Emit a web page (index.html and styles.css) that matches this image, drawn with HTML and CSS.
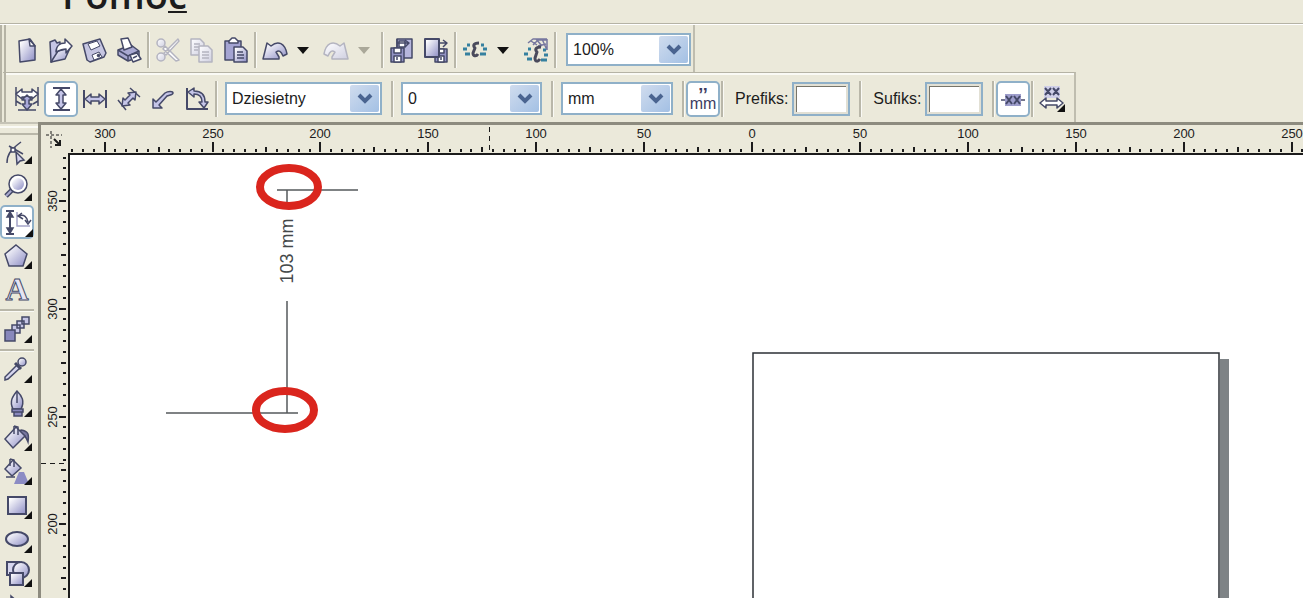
FILE: index.html
```html
<!DOCTYPE html>
<html lang="pl">

<head>
    <meta charset="UTF-8">
    <meta name="viewport" content="width=device-width, initial-scale=1.0">
    <title>Wymiarowanie</title>
    <link rel="stylesheet" href="styles.css">
</head>

<body>
    <!--Shared gradients-->
    <svg class="defs" width="0" height="0" aria-hidden="true">
        <defs>
            <linearGradient id="g" x1="0" y1="0" x2="1" y2="1">
                <stop offset="0.1" stop-color="#ffffff" />
                <stop offset="1" stop-color="#8c8cc4" />
            </linearGradient>
            <linearGradient id="gl" x1="0" y1="0" x2="1" y2="1">
                <stop offset="0.1" stop-color="#fafafd" />
                <stop offset="1" stop-color="#cfcfe0" />
            </linearGradient>
        </defs>
    </svg>

    <!--Menu-->
    <nav class="menubar">
        <button class="menuItem">Pomo<u>c</u></button>
    </nav>

    <!--Standard toolbar-->
    <div class="toolbar standard">
        <button class="tool" aria-label="Nowy"><svg class="icon" viewBox="0 0 26 26"><path fill="url(#g)" d="M5 4l11-2 5 7v14L6 25z" /><path fill="#fff" d="M15 2l1 7h5z" /></svg></button>
        <button class="tool" aria-label="Otwórz"><svg class="icon" viewBox="0 0 26 26"><path fill="#c6c6e6" d="M2 5l5-2 2 3 3-1v6L5 24l-2 1z" /><path fill="url(#g)" d="M3 25l7-11 12-3-5 11z" /><path fill="#fff" d="M8 15c0-6 4-9 9-9V2l7 7-6 7v-4c-4 0-6 1-10 3z" /></svg></button>
        <button class="tool" aria-label="Zapisz"><svg class="icon" viewBox="0 0 26 26"><path fill="#c6c6e2" d="M1 7L18 2l6 14-2 4-14 5-3-2z" /><path fill="#fff" stroke-width="1" d="M6 7l9-3 3 5-9 4zM10 18l7-3 3 5-8 3z" /><path stroke-width="1" fill="#454968" d="M15 18l2-1 1 2-2 1z" /></svg></button>
        <button class="tool" aria-label="Drukuj"><svg class="icon" viewBox="0 0 26 26"><path fill="#a9a9d2" d="M2 13l13-5 8 6v6l-11 4-10-6z" /><path fill="#fff" d="M5 2l7-1 4 9-8 3z" /><path d="M2 13l10 6 11-5M12 19v5" /><path fill="#fff" d="M14 18l7-2 4 6-8 3z" /><path d="M17 21l4-2" /></svg></button>
        <span class="sep"></span>
        <button class="tool" aria-label="Wytnij" disabled><svg class="icon pale" viewBox="0 0 26 26"><path fill="#fff" d="M23 2L9 16l2 2L24 4zM10 9l14 14-3 1L8 12z" /><circle cx="6" cy="6" r="4" fill="url(#gl)" /><circle cx="6" cy="20" r="4" fill="url(#gl)" /></svg></button>
        <button class="tool" aria-label="Kopiuj" disabled><svg class="icon pale" viewBox="0 0 26 26"><path fill="url(#gl)" d="M2 2h9l4 4v12H2z" /><path d="M5 7h6M5 10h6M5 13h4" /><path fill="url(#gl)" d="M10 9h9l4 4v12H10z" /><path d="M13 15h7M13 18h7M13 21h7" /></svg></button>
        <button class="tool" aria-label="Wklej"><svg class="icon" viewBox="0 0 26 26"><path fill="#a4a4d2" d="M2 4h16v19H2z" /><path fill="#fff" d="M6 6V4l3-3h3l3 3v2z" /><path fill="url(#g)" d="M11 10h9l4 4v11H11z" /><path d="M14 15h6M14 18h7M14 21h7" /></svg></button>
        <span class="sep"></span>
        <span class="split">
            <button class="tool" aria-label="Cofnij"><svg class="icon" viewBox="0 0 26 26"><path fill="url(#g)" d="M1 22L5 6l4 3c7-6 14-3 16 8l-4 2c-2-5-4-6-7-4l3 5v2z" /></svg></button>
            <button class="drop" aria-label="Lista cofania"><svg class="caret" viewBox="0 0 12 8"><path d="M0 1h12L6 8z" /></svg></button>
        </span>
        <span class="split">
            <button class="tool" aria-label="Przywróć" disabled><svg class="icon pale" viewBox="0 0 26 26"><path fill="url(#gl)" d="M25 22L21 6l-4 3C10 3 3 6 1 17l4 2c2-5 4-6 7-4l-3 5v2z" /></svg></button>
            <button class="drop" aria-label="Lista przywracania" disabled><svg class="caret off" viewBox="0 0 12 8"><path d="M0 1h12L6 8z" /></svg></button>
        </span>
        <span class="sep"></span>
        <button class="tool" aria-label="Importuj"><svg class="icon" viewBox="0 0 26 26"><path fill="#b6b6dc" d="M8 2h15v19H8z" /><path fill="#fff" d="M10 4h6v6h-6z" /><path d="M8 6h11M8 2v9M16 3l4 3-4 4" /><path fill="#9393c4" d="M2 11h13v14H2z" /><path fill="#fff" d="M5 11h7v5H5zM5 19h7v6H5z" /><path d="M8 20v3" /></svg></button>
        <button class="tool" aria-label="Eksportuj"><svg class="icon" viewBox="0 0 26 26"><path fill="#9393c4" d="M12 12h12v13H12z" /><path fill="#fff" d="M15 12h6v4h-6zM15 19h6v6h-6z" /><path d="M18 20v3" /><path fill="url(#g)" stroke-width="2" d="M2 2h14v18H2z" /><path d="M16 6h8M20 3l4 3-4 4" /></svg></button>
        <span class="sep"></span>
        <span class="split">
            <button class="tool" aria-label="Uruchamianie programów"><svg class="icon" viewBox="0 0 26 26"><path class="teal" d="M5 8h3M1 12h4M3 17h5M19 8h3M21 12h4M18 17h6" /><path class="swirl" d="M17 6c-6 0-6 3-4 5l-2 5c0 3 3 4 5 1" /></svg></button>
            <button class="drop" aria-label="Lista programów"><svg class="caret" viewBox="0 0 12 8"><path d="M0 1h12L6 8z" /></svg></button>
        </span>
        <button class="tool" aria-label="Corel w sieci"><svg class="icon" viewBox="0 0 26 26"><path stroke="#77779f" d="M5 6l5-4h14M8 4l6 4M13 2l6 7M19 2l5 11M24 2v11M10 8l5-5h9M15 9l8-2" /><path class="teal" d="M5 12h3M1 17h4M4 22h5M20 13h3M21 18h4M18 23h6" /><path class="swirl" d="M18 10c-6 0-6 3-4 5l-2 6c0 4 3 4 5 1" /></svg></button>
        <span class="sep"></span>
        <select class="combo zoom" aria-label="Powiększenie"><option>100%</option></select>
    </div>

    <!--Property bar of the dimension tool-->
    <div class="toolbar property">
        <button class="tool" aria-label="Wymiar automatyczny"><svg class="icon" viewBox="0 0 26 26"><path d="M2 1v19M24 1v19M3 6l7 6M23 6l-7 6M4 24h18M7 18l-5-3M19 18l5-3" /><path fill="#fff" d="M2 8l6-5v3h10V3l6 5-6 5v-2H8v2z" /><path fill="#a9a9da" d="M13 9l5 5h-3v4h3l-5 6-5-6h3v-4H8z" /></svg></button>
        <button class="tool active" aria-label="Wymiar pionowy"><svg class="icon" viewBox="0 0 26 26"><path stroke-width="2" d="M5 2h17M5 24h17" /><path fill="#c5c5e8" d="M13 3l5 6h-3v8h3l-5 6-5-6h3V9H8z" /></svg></button>
        <button class="tool" aria-label="Wymiar poziomy"><svg class="icon" viewBox="0 0 26 26"><path stroke-width="2" d="M2 4v18M24 4v18" /><path fill="#c5c5e8" d="M3 13l6-5v3h8V8l6 5-6 5v-3H9v3z" /></svg></button>
        <button class="tool" aria-label="Wymiar pochyły"><svg class="icon" viewBox="0 0 26 26"><path d="M14 2l10 9M2 14l8 10" /><path fill="#c5c5e8" d="M20 6l-1 8-2-2-5 5 2 2-8 1 1-8 2 2 5-5-2-2z" /></svg></button>
        <button class="tool" aria-label="Odnośnik"><svg class="icon" viewBox="0 0 26 26"><path fill="#c5c5e8" d="M3 22v-9l3 3 9-9c3-2 8-2 8 0s-4 2-6 3l-8 9 3 3z" /></svg></button>
        <button class="tool" aria-label="Wymiar kątowy"><svg class="icon" viewBox="0 0 26 26"><path stroke-width="2" d="M3 2v21h21" /><path fill="#c5c5e8" d="M4 6l6-4v3c7 0 11 4 11 11h3l-4 6-5-6h3c0-5-3-8-8-8v3z" /></svg></button>
        <span class="sep"></span>
        <select class="combo style" aria-label="Styl wymiaru"><option>Dziesietny</option></select>
        <span class="sep"></span>
        <select class="combo precision" aria-label="Dokładność"><option>0</option></select>
        <span class="sep"></span>
        <select class="combo units" aria-label="Jednostki"><option>mm</option></select>
        <span class="sep"></span>
        <button class="tool active unitMark" aria-label="Pokaż jednostki"><span class="marks">’’</span><span>mm</span></button>
        <span class="sep"></span>
        <label class="caption" for="prefix">Prefiks:</label>
        <input class="affix" id="prefix" type="text">
        <span class="sep"></span>
        <label class="caption" for="suffix">Sufiks:</label>
        <input class="affix" id="suffix" type="text">
        <span class="sep"></span>
        <button class="tool active" aria-label="Wymiar dynamiczny"><svg class="icon" viewBox="0 0 26 26"><path d="M1 14h24" /><path fill="#9d9dcb" stroke="none" d="M5 8h16v12H5z" /><path stroke-width="2" d="M6 10l6 8M12 10l-6 8M14 10l6 8M20 10l-6 8" /></svg></button>
        <span class="sep"></span>
        <button class="tool" aria-label="Położenie tekstu wymiaru"><svg class="icon" viewBox="0 0 26 26"><path fill="#cfcfe8" stroke="none" d="M5 0h16v12H5z" /><path stroke-width="2" d="M6 2l6 7M12 2L6 9M14 2l6 7M20 2l-6 7" /><path fill="#fff" d="M1 17l6-5v3h11v-3l6 5-6 5v-3H7v3z" /><path class="flyout" d="M26 18v8h-8z" /></svg></button>
    </div>

    <div class="workspace">
        <!--Toolbox-->
        <aside class="toolbox">
            <div class="grip"></div>
            <button class="pick" aria-label="Kształt"><svg viewBox="0 0 34 34"><path d="M7 26c0-8 3-13 14-21M9 9l14 8" /><path fill="#fff" d="M11 11h4v4h-4z" /><path fill="#d6d6ee" d="M16 15l8 8-4 1-3 3z" /><path class="flyout" d="M32 19v8h-8z" /></svg></button>
            <button class="pick" aria-label="Lupka"><svg viewBox="0 0 34 34"><path stroke-width="5" d="M12 19l-6 6" /><path stroke="#a9a9cf" stroke-width="2" d="M12 19l-6 6" /><circle cx="18" cy="13" r="9" fill="#fff" /><circle cx="18" cy="13" r="6" fill="url(#g)" stroke="none" /><path class="flyout" d="M32 22v8h-8z" /></svg></button>
            <button class="pick active" aria-label="Wymiar"><svg viewBox="0 0 34 34"><path stroke-width="2" d="M6 6h8M6 29h8M10 7v21" /><path fill="#454968" d="M10 7l3 5H7zM10 28l3-5H7z" /><path stroke="#a4a4c8" d="M17 7v14h13" /><path d="M19 11c5-2 8 1 9 6M22 8l-4 3 5 3M25 15l3 4 3-4" /><path class="flyout" d="M33 24v8h-8z" /></svg></button>
            <button class="pick" aria-label="Wielokąt"><svg viewBox="0 0 34 34"><path fill="url(#g)" d="M16 6l11 9-4 12H9L5 15z" /><path class="flyout" d="M32 22v8h-8z" /></svg></button>
            <button class="pick" aria-label="Tekst"><svg viewBox="0 0 34 34"><text class="letter" x="17" y="27" text-anchor="middle">A</text></svg></button>
            <span class="rule"></span>
            <button class="pick" aria-label="Metamorfoza"><svg viewBox="0 0 34 34"><path fill="#c6c6e6" d="M22 4h7v7h-7zM17 8h7v7h-7zM12 12h8v8h-8z" /><path fill="#8888bc" d="M5 17h10v11H5z" /><path class="flyout" d="M32 22v8h-8z" /></svg></button>
            <span class="rule"></span>
            <button class="pick" aria-label="Kroplomierz"><svg viewBox="0 0 34 34"><path fill="#d6d6ee" d="M17 12l3 3L8 26l-3 1v-3z" /><circle cx="22" cy="9" r="4" fill="url(#g)" /><path stroke-width="3" d="M15 10l6 6" /><path class="flyout" d="M32 22v8h-8z" /></svg></button>
            <button class="pick" aria-label="Kontur"><svg viewBox="0 0 34 34"><path fill="url(#g)" d="M17 4c5 5 8 10 4 18h-8c-4-8 0-13 4-18z" /><path d="M17 4v12" /><path fill="#8888bc" d="M12 22h11v3H12zM14 25h8v4h-8z" /><path class="flyout" d="M32 22v8h-8z" /></svg></button>
            <button class="pick" aria-label="Wypełnienie"><svg viewBox="0 0 34 34"><path fill="#77779f" d="M21 9c8 1 8 5 7 12-2-5-3-7-9-9z" /><path fill="url(#g)" d="M5 18L16 6l9 9-12 12z" /><path d="M14 5v8M14 5l4 1v8" /><path class="flyout" d="M32 22v8h-8z" /></svg></button>
            <button class="pick" aria-label="Wypełnienie interaktywne"><svg viewBox="0 0 34 34"><path fill="url(#g)" d="M5 14l8-9 8 8-9 8z" /><path d="M10 4v7M10 4l4 1v7M6 22h9" /><path fill="#8c8cc4" stroke="none" d="M19 17h5l5 12H14z" /><path class="flyout" d="M32 22v8h-8z" /></svg></button>
            <button class="pick" aria-label="Prostokąt"><svg viewBox="0 0 34 34"><path fill="url(#g)" stroke-width="2" d="M8 8h18v17H8z" /><path class="flyout" d="M32 22v8h-8z" /></svg></button>
            <button class="pick" aria-label="Elipsa"><svg viewBox="0 0 34 34"><ellipse cx="17" cy="16" rx="11" ry="7" fill="url(#g)" stroke-width="2" /><path class="flyout" d="M32 22v8h-8z" /></svg></button>
            <button class="pick" aria-label="Kształty podstawowe"><svg viewBox="0 0 34 34"><path fill="#d6d6ee" stroke-width="2" d="M7 5h12v13H7z" /><circle cx="21" cy="13" r="8" fill="url(#g)" stroke-width="2" /><path fill="url(#g)" stroke-width="2" d="M10 16h13v12H10z" /><path class="flyout" d="M32 22v8h-8z" /></svg></button>
            <button class="pick" aria-label="Wskaźnik"><svg viewBox="0 0 34 34"><path fill="#454968" d="M11 5l16 14H11z" /></svg></button>
        </aside>

        <!--Rulers and drawing area-->
        <main class="desk">
            <div class="corner">
                <svg class="origin" viewBox="0 0 18 18"><path stroke-dasharray="3 2" d="M5 1v17M0 5h16" /><path stroke-width="2" d="M8 9l6 6M14 10v5H9" /></svg>
            </div>
            <svg class="ruler" id="rulerTop"><path class="track" d="M421 2v25" /></svg>
            <svg class="ruler" id="rulerLeft"><path class="track" d="M0 310h26" /></svg>
            <svg class="canvas">
                <rect class="shadow" x="1150" y="204" width="9" height="600" />
                <rect class="page" x="683" y="198" width="466" height="600" />
                <path class="dimension" d="M207 35h81M217 35v16M217 146v112M96 258h132" />
                <text class="measure" transform="translate(223 96) rotate(-90)" text-anchor="middle">103 mm</text>
                <ellipse class="mark" cx="219" cy="32" rx="29" ry="19" />
                <ellipse class="mark" cx="215" cy="255" rx="29" ry="19" />
            </svg>
        </main>
    </div>

    <!--Script-->
    <script>
        const svgNS = 'http://www.w3.org/2000/svg';
        const step = 10.79; // pixels for 5 mm

        function addNode(parent, name, attributes) {
            const node = document.createElementNS(svgNS, name);
            for (const key in attributes) {
                node.setAttribute(key, attributes[key]);
            }
            parent.appendChild(node);
            return node;
        }

        // zero is where 0 mm falls, direction is -1 when values grow upwards
        function drawRuler(id, zero, direction, vertical) {
            const ruler = document.getElementById(id);
            const length = vertical ? ruler.clientHeight : ruler.clientWidth;
            let ticks = '';
            for (let i = -100; i <= 100; i++) {
                const at = Math.round(zero + i * step * direction);
                if (at < 0 || at > length) continue;
                const size = i % 10 === 0 ? (vertical ? 7 : 10) : i % 5 === 0 ? 5 : 3;
                ticks += vertical ? `M${25 - size} ${at}h${size}` : `M${at} ${27 - size}v${size}`;
                if (i % 10 === 0) {
                    const place = vertical ? `translate(16 ${at}) rotate(-90)` : `translate(${at} 13)`;
                    const label = addNode(ruler, 'text', { transform: place, 'text-anchor': 'middle' });
                    label.textContent = Math.abs(i * 5);
                }
            }
            addNode(ruler, 'path', { d: ticks, class: 'ticks' });
        }

        drawRuler('rulerTop', 684, 1, false);
        drawRuler('rulerLeft', 803, -1, true);
    </script>
</body>

</html>
```
FILE: styles.css
```css
* {
    box-sizing: border-box;
}

body {
    margin: 0;
    height: 100vh;
    display: flex;
    flex-direction: column;
    overflow: hidden;
    background-color: #ebe9da;
    color: #1c1c1c;
    font-family: "Liberation Sans", Arial, sans-serif;
    font-size: 16px;
}

button {
    margin: 0;
    padding: 0;
    border: none;
    background: none;
    color: inherit;
    font: inherit;
}

svg {
    display: block;
    fill: none;
    stroke: #454968;
}

.defs {
    position: absolute;
}

.menubar {
    display: flex;
    flex: none;
    align-items: flex-end;
    height: 25px;
    padding-left: 62px;
    overflow: hidden;
    border-bottom: 1px solid #fff;
    box-shadow: inset 0 -1px #b5b3a5;
}

.menuItem {
    font-family: "Open Sans", sans-serif;
    font-size: 38px;
    font-weight: 600;
    line-height: 60px;
}

.menuItem u {
    text-decoration-thickness: 2px;
    text-underline-offset: 2px;
    text-decoration-skip-ink: none;
}

/* toolbars */

.toolbar {
    display: flex;
    flex: none;
    align-items: center;
    align-self: flex-start;
    padding-left: 4px;
    border-left: 6px double #b5b3a5;
    border-right: 2px solid #bfbdaf;
}

.standard {
    height: 47px;
    padding-top: 2px;
    padding-right: 2px;
}

.property {
    height: 50px;
    padding-top: 2px;
    padding-right: 5px;
    border-top: 1px solid #b5b3a5;
    box-shadow: inset 0 2px #fafaf5;
}

.tool {
    display: flex;
    flex: none;
    align-items: center;
    justify-content: center;
    width: 34px;
    height: 36px;
}

.active {
    border: 2px solid #8fb0c8;
    border-radius: 5px;
    background-color: #fff;
}

.icon {
    flex: none;
    width: 26px;
    height: 26px;
    stroke-width: 1.5;
    stroke-linejoin: round;
}

.pale {
    stroke: #b4b4c0;
}

.teal {
    stroke: #35809f;
    stroke-width: 3;
}

.swirl {
    stroke: #4a4a5c;
    stroke-width: 3;
}

.split {
    display: flex;
    align-items: center;
    margin-right: 5px;
}

.drop {
    display: flex;
    align-items: center;
    justify-content: center;
    width: 22px;
    height: 36px;
}

.caret {
    width: 12px;
    height: 8px;
    fill: #111;
    stroke: none;
}

.off {
    fill: #aaa899;
}

.sep {
    flex: none;
    width: 2px;
    height: 36px;
    margin: 0 2px 0 1px;
    background-color: #b9b7a9;
    box-shadow: 1px 0 #fafaf5;
}

.combo {
    appearance: none;
    height: 33px;
    margin: 0 8px 0 6px;
    padding: 0 34px 0 5px;
    border: 2px solid #8fb0c8;
    border-radius: 0;
    background: #fff url("data:image/svg+xml,%3Csvg xmlns='http://www.w3.org/2000/svg' width='29' height='27'%3E%3ClinearGradient id='a' x2='1' y2='1'%3E%3Cstop stop-color='%23d0dcee'/%3E%3Cstop offset='1' stop-color='%23a3c0e4'/%3E%3C/linearGradient%3E%3Crect width='29' height='27' rx='2' fill='url(%23a)'/%3E%3Cpath d='M9 10l6 6 6-6' fill='none' stroke='%234a6490' stroke-width='4'/%3E%3C/svg%3E") no-repeat right 1px center;
    color: #1c1c1c;
    font: inherit;
}

.zoom {
    width: 125px;
    margin: 0 0 0 8px;
}

.style {
    width: 157px;
}

.precision {
    width: 141px;
}

.units {
    width: 112px;
}

.unitMark {
    flex-direction: column;
    color: #3d3d62;
    line-height: 13px;
}

.marks {
    height: 10px;
    font-size: 18px;
    font-weight: bold;
    line-height: 16px;
}

.caption {
    margin: 0 4px 0 10px;
}

.affix {
    width: 58px;
    height: 34px;
    margin-right: 8px;
    padding: 0 6px;
    border: 2px solid #8fb0c8;
    background-color: #fff;
    box-shadow: inset 0 0 0 2px #e2e0d4, inset 3px 3px #77756a;
    font: inherit;
}

/* toolbox */

.workspace {
    display: flex;
    flex: 1;
    min-height: 0;
}

.toolbox {
    display: flex;
    flex: none;
    flex-direction: column;
    width: 38px;
    overflow: hidden;
    border-top: 2px solid #c5c3b6;
}

.grip {
    flex: none;
    height: 9px;
    margin: 2px 0;
    border-top: 2px solid #fafaf5;
    border-bottom: 2px solid #b9b7a9;
}

.pick {
    flex: none;
    width: 34px;
    height: 34px;
}

.pick svg {
    width: 34px;
    height: 34px;
    stroke-width: 1.5;
}

.pick.active {
    padding: 0;
    border: none;
    box-shadow: inset 0 0 0 2px #8fb0c8;
}

.pick .flyout,
.icon .flyout {
    fill: #111;
    stroke: none;
}

.letter {
    fill: #e4e4f4;
    stroke-width: 1;
    font-family: "Liberation Serif", serif;
    font-size: 32px;
    font-weight: bold;
}

.rule {
    flex: none;
    height: 2px;
    margin: 2px 4px 2px 0;
    background-color: #b9b7a9;
    box-shadow: 0 1px #fafaf5;
}

/* rulers and canvas */

.desk {
    display: grid;
    flex: 1;
    grid-template-rows: 28px 1fr;
    grid-template-columns: 27px 1fr;
    min-width: 0;
    border-top: 3px solid #8d8b7f;
    border-left: 3px solid #8d8b7f;
}

.corner {
    display: flex;
    align-items: center;
    justify-content: center;
}

.origin {
    width: 18px;
    height: 18px;
    stroke: #1c1c1c;
}

.ruler {
    width: 100%;
    height: 100%;
    min-height: 0;
    overflow: hidden;
    shape-rendering: crispEdges;
}

.ruler text {
    fill: #1c1c1c;
    stroke: none;
    font-size: 13px;
}

.ticks {
    stroke: #1c1c1c;
    stroke-width: 2;
}

.track {
    stroke: #1c1c1c;
    stroke-width: 1;
    stroke-dasharray: 5 4;
}

.canvas {
    width: 100%;
    height: 100%;
    min-height: 0;
    overflow: hidden;
    border-top: 2px solid #1c1c1c;
    border-left: 2px solid #1c1c1c;
    background-color: #fff;
}

.page {
    fill: #fff;
    stroke: #2c3036;
    stroke-width: 1.5;
}

.shadow {
    fill: #7e8386;
    stroke: none;
}

.dimension {
    stroke: #555a5c;
    stroke-width: 1.5;
}

.measure {
    fill: #444849;
    stroke: none;
    font-size: 18px;
}

.mark {
    stroke: #da251d;
    stroke-width: 8;
}
```
